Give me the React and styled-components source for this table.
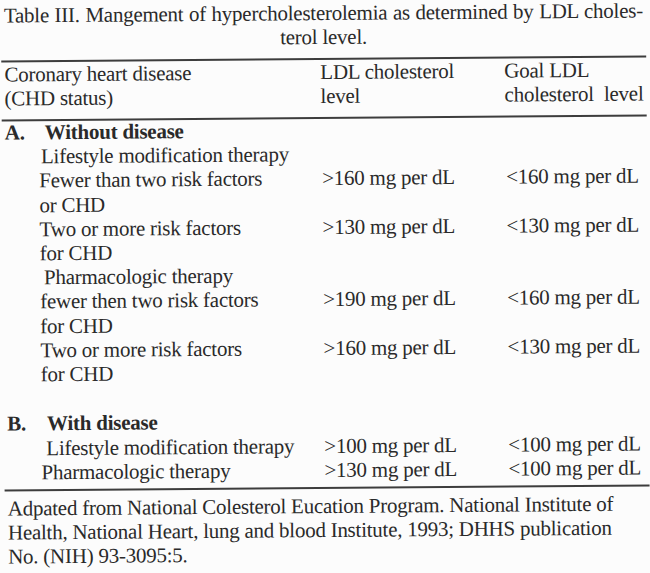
import React from 'react';
import styled, { createGlobalStyle } from 'styled-components';

const GlobalStyle = createGlobalStyle`
  html, body {
    margin: 0;
    padding: 0;
    background: #fcfcfc;
  }
`;

const Sheet = styled.div`
  width: 650px;
  height: 573px;
  box-sizing: border-box;
  padding: 1px 4px 0 6px;
  font-family: "Liberation Serif", "Times New Roman", Times, serif;
  font-size: 21px;
  letter-spacing: -0.25px;
  color: #2a2a2a;
  transform: rotate(-0.45deg);
  transform-origin: 325px 286px;
  overflow: hidden;
`;

const Caption = styled.div`
  line-height: 24px;
  margin-right: 1px;
`;

const CaptionLine = styled.div`
  text-align: ${p => (p.center ? 'center' : 'justify')};
  text-align-last: ${p => (p.center ? 'center' : 'justify')};
`;

const Rule = styled.hr`
  border: 0;
  height: 2px;
  background: #3d3d3d;
  margin: ${p => p.top}px -2px 0 -3px;
`;

const Grid = styled.div`
  display: grid;
  grid-template-columns: 316px 183px 1fr;
  line-height: ${p => p.lh}px;
  margin-top: ${p => p.top}px;
`;

const Cell = styled.div`
  padding-left: ${p => p.indent || 0}px;
  white-space: nowrap;
`;

const Section = styled.div`
  grid-column: 1 / -1;
  font-weight: bold;
  display: flex;
`;

const Letter = styled.span`
  width: 40px;
`;

const Blank = styled.div`
  grid-column: 1 / -1;
  height: ${p => p.h}px;
`;

const Note = styled.p`
  margin: 5px 0 0;
  line-height: 24px;
`;

const sectionA = [
  { label: ['Lifestyle modification therapy'], indent: 36 },
  { label: ['Fewer than two risk factors', 'or CHD'], indent: 34, ldl: '>160 mg per dL', goal: '<160 mg per dL' },
  { label: ['Two or more risk factors', 'for CHD'], indent: 34, ldl: '>130 mg per dL', goal: '<130 mg per dL' },
  { label: ['Pharmacologic therapy'], indent: 38 },
  { label: ['fewer then two risk factors', 'for CHD'], indent: 34, ldl: '>190 mg per dL', goal: '<160 mg per dL' },
  { label: ['Two or more risk factors', 'for CHD'], indent: 34, ldl: '>160 mg per dL', goal: '<130 mg per dL' },
];

const sectionB = [
  { label: ['Lifestyle modification therapy'], indent: 39, ldl: '>100 mg per dL', goal: '<100 mg per dL' },
  { label: ['Pharmacologic therapy'], indent: 34, ldl: '>130 mg per dL', goal: '<100 mg per dL' },
];

const renderRows = rows =>
  rows.map((row, i) => (
    <React.Fragment key={i}>
      <Cell indent={row.indent}>
        {row.label.map((line, j) => (
          <div key={j}>{line}</div>
        ))}
      </Cell>
      <Cell indent={1}>{row.ldl}</Cell>
      <Cell indent={2}>{row.goal}</Cell>
    </React.Fragment>
  ));

export default function App() {
  return (
    <>
      <GlobalStyle />
      <Sheet>
        <Caption>
          <CaptionLine>Table III. Mangement of hypercholesterolemia as determined by LDL choles-</CaptionLine>
          <CaptionLine center>terol level.</CaptionLine>
        </Caption>
        <Rule top={9} />
        <Grid lh={24} top={0}>
          <Cell>
            <div>Coronary heart disease</div>
            <div>(CHD status)</div>
          </Cell>
          <Cell>
            <div>LDL cholesterol</div>
            <div>level</div>
          </Cell>
          <Cell indent={1}>
            <div>Goal LDL</div>
            <div>cholesterol&nbsp; level</div>
          </Cell>
        </Grid>
        <Rule top={9} />
        <Grid lh={24.2} top={-1}>
          <Section>
            <Letter>A.</Letter>
            <span>Without disease</span>
          </Section>
          {renderRows(sectionA)}
          <Blank h={25.2} />
          <Section>
            <Letter>B.</Letter>
            <span>With disease</span>
          </Section>
          {renderRows(sectionB)}
        </Grid>
        <Rule top={5} />
        <Note>
          Adpated from National Colesterol Eucation Program. National Institute of
          <br />
          Health, National Heart, lung and blood Institute, 1993; DHHS publication
          <br />
          No. (NIH) 93-3095:5.
        </Note>
      </Sheet>
    </>
  );
}
